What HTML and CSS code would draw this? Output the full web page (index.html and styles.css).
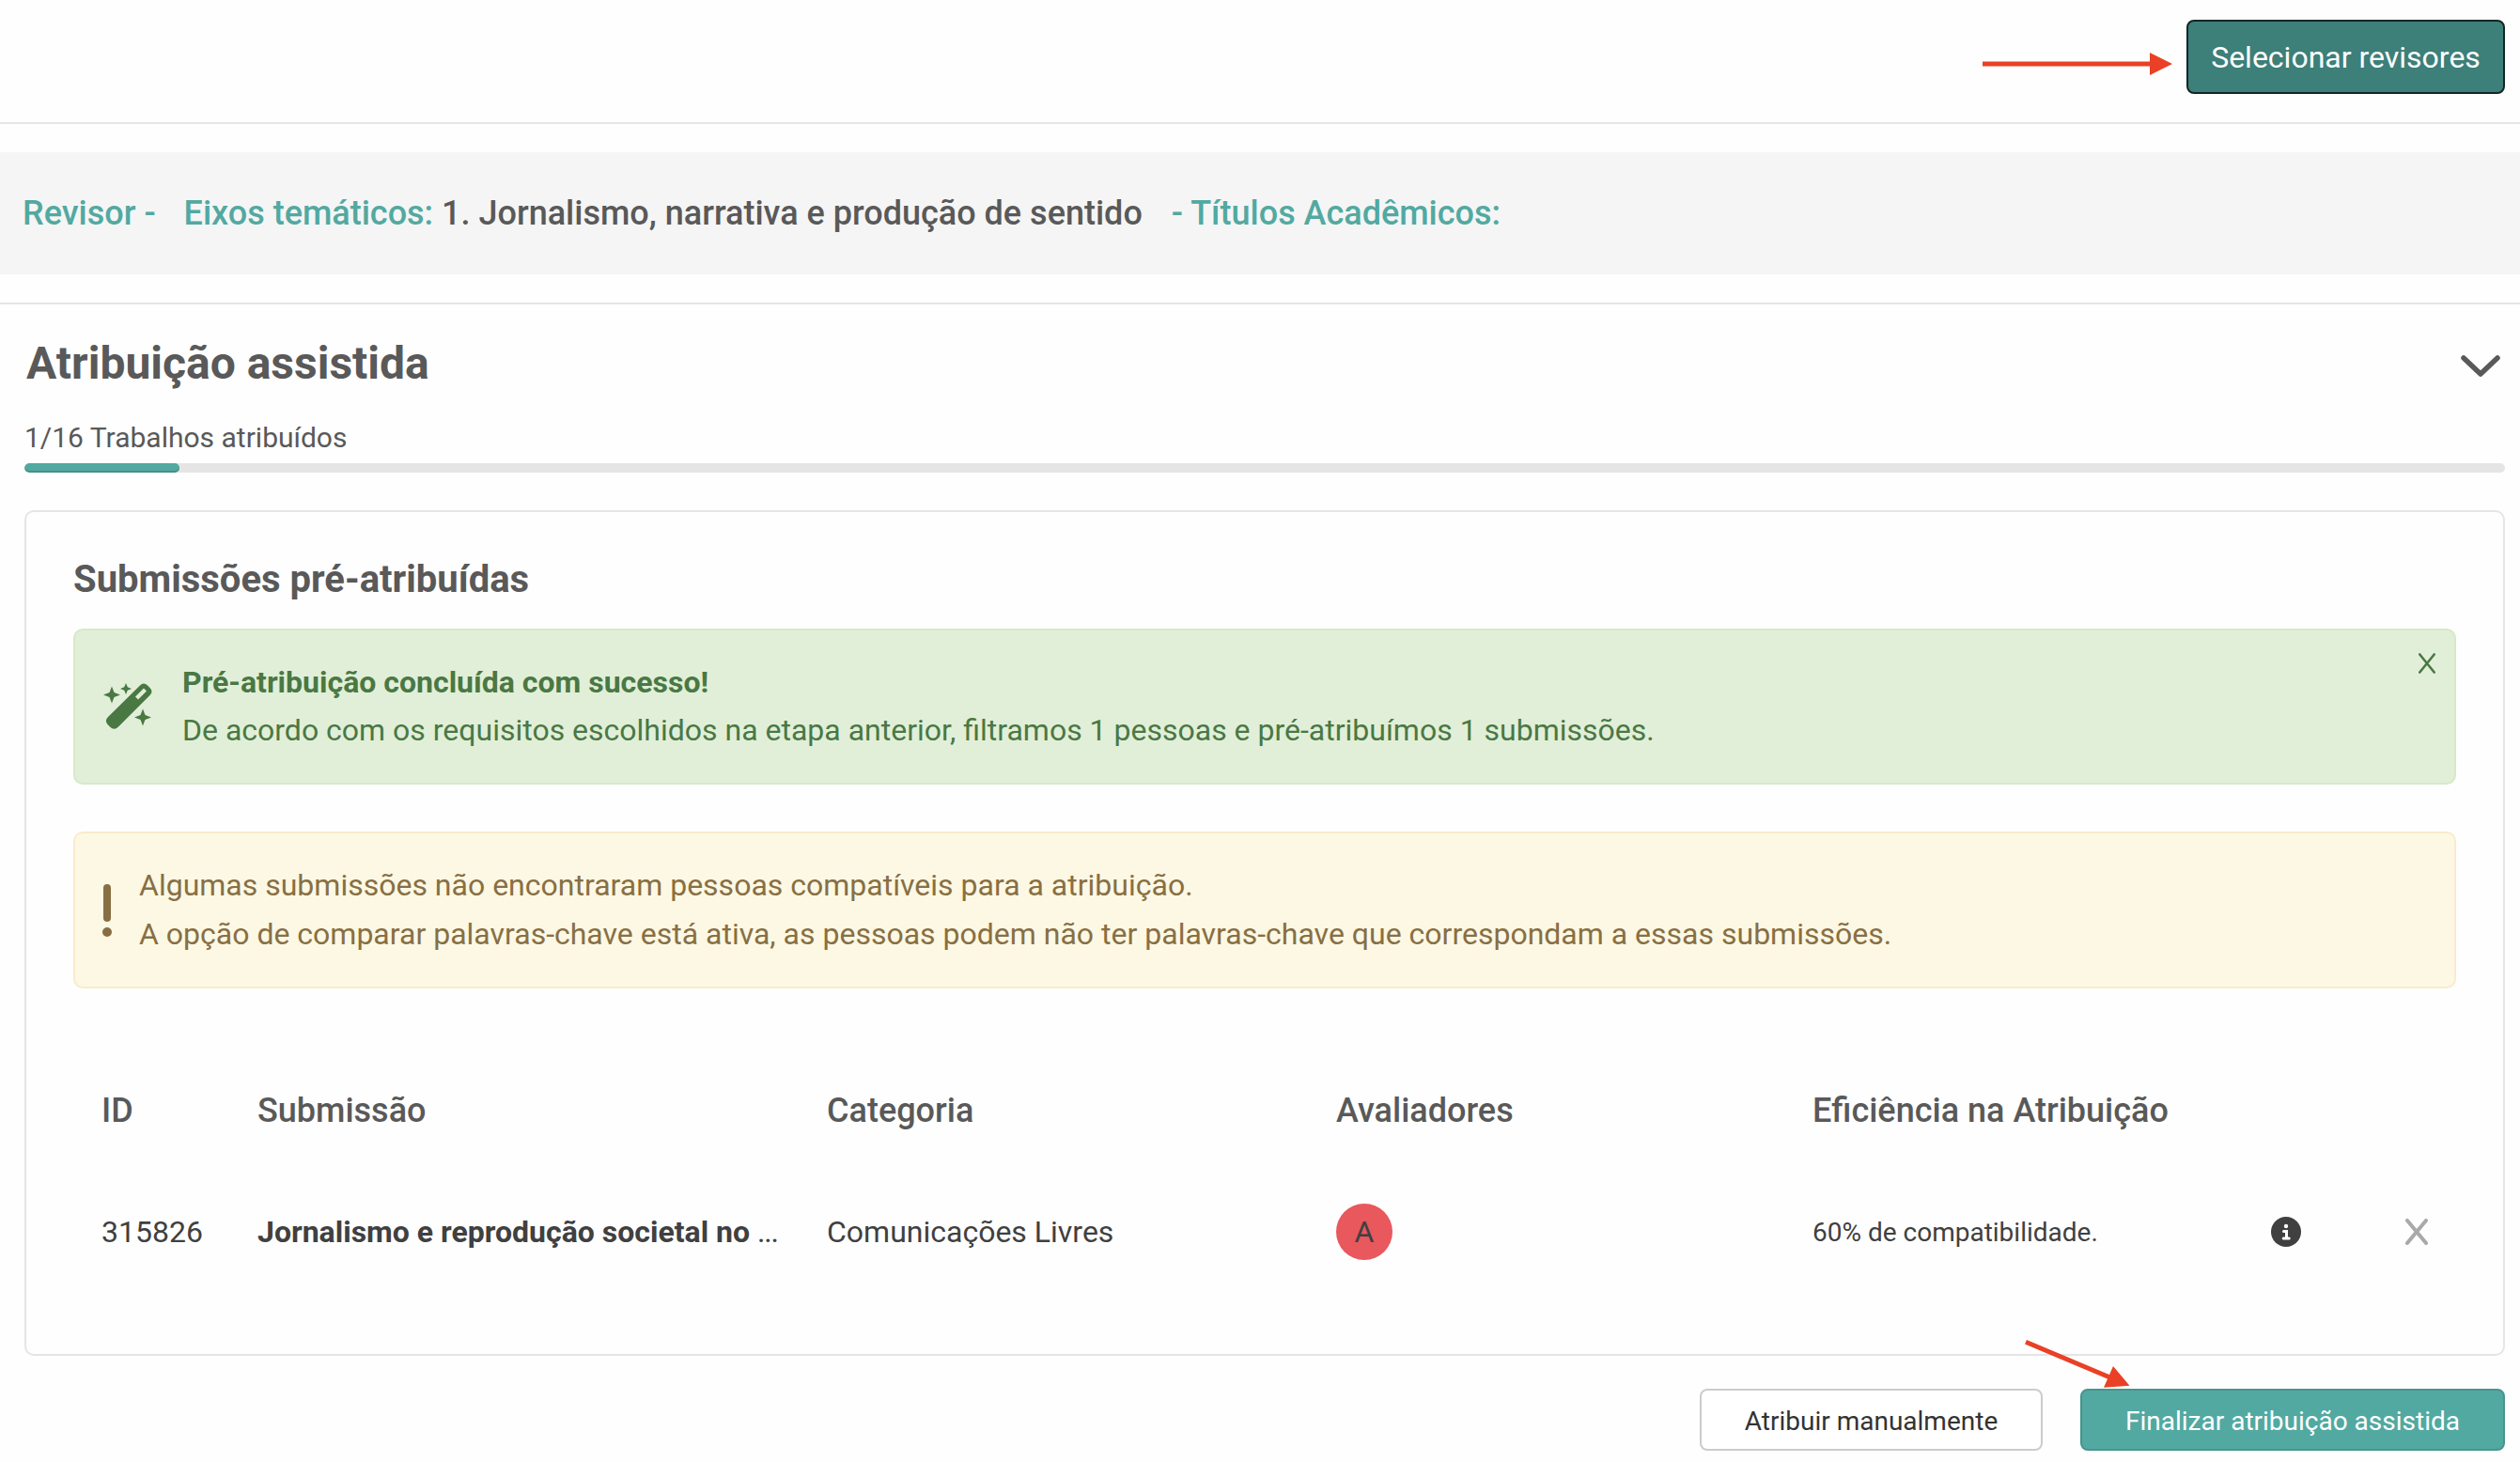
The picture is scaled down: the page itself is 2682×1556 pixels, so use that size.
FILE: index.html
```html
<!DOCTYPE html>
<html lang="pt-BR">
<head>
    <meta charset="UTF-8">
    <meta name="viewport" content="width=device-width, initial-scale=1.0">
    <title>Atribuição assistida</title>
    <link rel="stylesheet" href="styles.css">
</head>
<body>
    <div class="top-bar">
        <button class="btn btn-select">Selecionar revisores</button>
        <svg class="arrow arrow-top" width="202" height="24" viewBox="0 0 202 24">
            <path d="M0 9.500h178V0l24 12-24 12v-9.500H0z"/>
        </svg>
    </div>

    <div class="filter-bar">
        <span class="filter-label">Revisor -</span>
        <span class="filter-label filter-axes">Eixos temáticos:</span>
        <span class="filter-value">1. Jornalismo, narrativa e produção de sentido</span>
        <span class="filter-label filter-titles">- Títulos Acadêmicos:</span>
    </div>

    <div class="main">
        <div class="section-header">
            <h1 class="section-title">Atribuição assistida</h1>
            <svg class="chevron" width="44" height="26" viewBox="0 0 44 26">
                <path d="M4 4l18 17L40 4"/>
            </svg>
        </div>

        <div class="progress-text">1/16 Trabalhos atribuídos</div>
        <div class="progress-bar">
            <div class="progress-fill" style="width: 6.25%"></div>
        </div>

        <div class="card">
            <h2 class="card-title">Submissões pré-atribuídas</h2>

            <div class="alert alert-success">
                <svg class="icon-wand" width="52" height="50" viewBox="0 0 52 50">
                    <path fill-rule="evenodd" d="M39 2.500q4-4 8 0l2.500 2.500q4 4 0 8L16 46.500q-4.500 4.500-9 0l-2.500-2.500q-3.500-4 .5-8zM34 14.500l3 3 9-9-3-3z"/>
                    <path d="M9 3.500l2.500 6.500 6.500 2.500-6.500 2.500L9 21.500 6.500 15 0 12.500 6.500 10z"/>
                    <path d="M24 0l1.800 4.200L30 6l-4.200 1.800L24 12l-1.800-4.200L18 6l4.200-1.800z"/>
                    <path d="M42 27.500l2.500 6.500 6.500 2.500-6.500 2.500L42 45.500 39.500 39 33 36.500l6.500-2.500z"/>
                </svg>
                <div class="alert-text">
                    <strong>Pré-atribuição concluída com sucesso!</strong>
                    <div>De acordo com os requisitos escolhidos na etapa anterior, filtramos 1 pessoas e pré-atribuímos 1 submissões.</div>
                </div>
                <svg class="alert-close" width="18" height="22" viewBox="0 0 18 22">
                    <path d="M1.300 1.500l15.400 19M16.700 1.500l-15.400 19"/>
                </svg>
            </div>

            <div class="alert alert-warning">
                <svg class="icon-exclamation" width="10" height="56" viewBox="0 0 10 56">
                    <rect x="1" y="0" width="8" height="40" rx="4"/>
                    <circle cx="5" cy="51" r="5"/>
                </svg>
                <div class="alert-text">
                    <div>Algumas submissões não encontraram pessoas compatíveis para a atribuição.</div>
                    <div>A opção de comparar palavras-chave está ativa, as pessoas podem não ter palavras-chave que correspondam a essas submissões.</div>
                </div>
            </div>

            <div class="grid-row grid-head">
                <div>ID</div>
                <div>Submissão</div>
                <div>Categoria</div>
                <div>Avaliadores</div>
                <div>Eficiência na Atribuição</div>
            </div>
            <div class="grid-row grid-body">
                <div>315826</div>
                <div><strong>Jornalismo e reprodução societal no</strong> <span class="dots">...</span></div>
                <div>Comunicações Livres</div>
                <div><span class="avatar">A</span></div>
                <div class="match">60% de compatibilidade.</div>
                <svg class="icon-info" width="32" height="32" viewBox="0 0 32 32">
                    <circle cx="16" cy="16" r="16"/>
                    <circle class="info-mark" cx="16" cy="10" r="2.200"/>
                    <path class="info-line" d="M13.500 15.500h3v7.500M13.200 23h6"/>
                </svg>
                <svg class="icon-remove" width="24" height="28" viewBox="0 0 24 28">
                    <path d="M2 2l20 24M22 2L2 26"/>
                </svg>
            </div>
        </div>

        <div class="actions">
            <button class="btn btn-default">Atribuir manualmente</button>
            <button class="btn btn-primary">Finalizar atribuição assistida</button>
            <svg class="arrow arrow-bottom" width="112" height="54" viewBox="0 0 112 54">
                <path d="M1 4.300l89 37.500" fill="none"/>
                <path d="M94 30l17.500 20.800L84 52.700z" stroke="none"/>
            </svg>
        </div>
    </div>
</body>
</html>
```
FILE: styles.css
```css
* {
    box-sizing: border-box;
}

body {
    margin: 0;
    background: #fefefe;
    font-family: Roboto, 'Liberation Sans', sans-serif;
    font-size: 32px;
    color: #595959;
}

h1,
h2 {
    margin: 0;
    font-weight: bold;
}

svg {
    display: block;
    flex-shrink: 0;
}

.top-bar {
    position: relative;
    display: flex;
    justify-content: flex-end;
    height: 132px;
    padding: 21px 16px 0 0;
    border-bottom: 2px solid #e5e5e5;
}

.btn {
    border-radius: 8px;
    padding: 0;
    font-family: inherit;
    text-align: center;
    white-space: nowrap;
    cursor: pointer;
}

.btn-select {
    width: 339px;
    height: 79px;
    background: #3d7f79;
    border: 2px solid #122725;
    color: #fff;
    font-size: 32px;
}

.filter-bar {
    display: flex;
    align-items: center;
    height: 130px;
    margin-top: 30px;
    padding: 0 24px;
    background: #f5f5f5;
    font-size: 36px;
    font-weight: 500;
    white-space: nowrap;
}

.filter-label {
    color: #52a9a1;
}

.filter-axes {
    margin: 0 9px 0 30px;
}

.filter-titles {
    margin-left: 31px;
}

.main {
    margin-top: 30px;
    padding: 35px 16px 0 26px;
    border-top: 2px solid #e5e5e5;
}

.section-header {
    display: flex;
    justify-content: space-between;
    align-items: center;
    padding: 0 4px 0 2px;
}

.section-title {
    font-size: 48px;
    line-height: 56px;
}

.chevron {
    margin-top: 5px;
}

.chevron path {
    fill: none;
    stroke: #595959;
    stroke-width: 5.500;
    stroke-linecap: round;
    stroke-linejoin: round;
}

.progress-text {
    margin-top: 31px;
    font-size: 30px;
    line-height: 40px;
}

.progress-bar {
    height: 10px;
    margin-top: 7px;
    background: #e5e5e5;
    border-radius: 5px;
    overflow: hidden;
}

.progress-fill {
    height: 100%;
    background: #52a9a1;
    border-radius: 5px;
    box-shadow: inset 0 -2px 0 rgba(0, 0, 0, 0.15);
}

.card {
    height: 900px;
    margin-top: 40px;
    padding: 46px 50px 0;
    border: 2px solid #e5e5e5;
    border-radius: 10px;
}

.card-title {
    font-size: 40px;
    line-height: 52px;
}

.alert {
    position: relative;
    display: flex;
    align-items: center;
    height: 166px;
    padding-left: 30px;
    border: 2px solid;
    border-radius: 10px;
    line-height: 51.4px;
    white-space: nowrap;
}

.alert-success {
    margin-top: 26px;
    background: #e1efd9;
    border-color: #d6e9c6;
    color: #4a7843;
    fill: #4a7843;
}

.alert-success .alert-text {
    margin-left: 32px;
}

.alert-close {
    position: absolute;
    top: 24px;
    right: 20px;
    stroke: #4a7843;
    stroke-width: 2.600;
    stroke-linecap: round;
}

.alert-warning {
    height: 167px;
    margin-top: 50px;
    padding-left: 29px;
    background: #fcf8e4;
    border-color: #faebcc;
    color: #886f43;
    fill: #886f43;
}

.alert-warning .alert-text {
    margin-left: 29px;
}

.grid-row {
    display: grid;
    grid-template-columns: 166px 606px 542px 507px 488px 143px 1fr;
    align-items: center;
    padding-left: 30px;
    white-space: nowrap;
}

.grid-head {
    margin-top: 106px;
    height: 48px;
    font-size: 36px;
    font-weight: 500;
}

.grid-body {
    height: 60px;
    margin-top: 75px;
    color: #404040;
}

.dots {
    letter-spacing: -1.2px;
}

.avatar {
    display: flex;
    justify-content: center;
    align-items: center;
    width: 60px;
    height: 60px;
    border-radius: 50%;
    background: #e8585d;
}

.match {
    font-size: 28px;
}

.icon-info {
    fill: #404040;
}

.icon-info .info-mark {
    fill: #fff;
}

.icon-info .info-line {
    fill: none;
    stroke: #fff;
    stroke-width: 3;
    stroke-linecap: round;
}

.icon-remove {
    stroke: #a9a9a9;
    stroke-width: 4;
    stroke-linecap: round;
}

.actions {
    position: relative;
    display: flex;
    justify-content: flex-end;
    gap: 40px;
    margin-top: 35px;
}

.btn-default,
.btn-primary {
    height: 66px;
    padding-top: 3px;
    font-size: 28px;
}

.btn-default {
    width: 365px;
    background: #fff;
    border: 2px solid #ccc;
    color: #333;
}

.btn-primary {
    width: 452px;
    background: #52a9a1;
    border: 2px solid #47958e;
    color: #fff;
}

/* red pointer arrows over the page */
.arrow {
    position: absolute;
    fill: #ea4025;
}

.arrow-top {
    top: 56px;
    right: 370px;
}

.arrow-bottom {
    top: -54px;
    right: 399px;
    stroke: #ea4025;
    stroke-width: 5;
}
```
